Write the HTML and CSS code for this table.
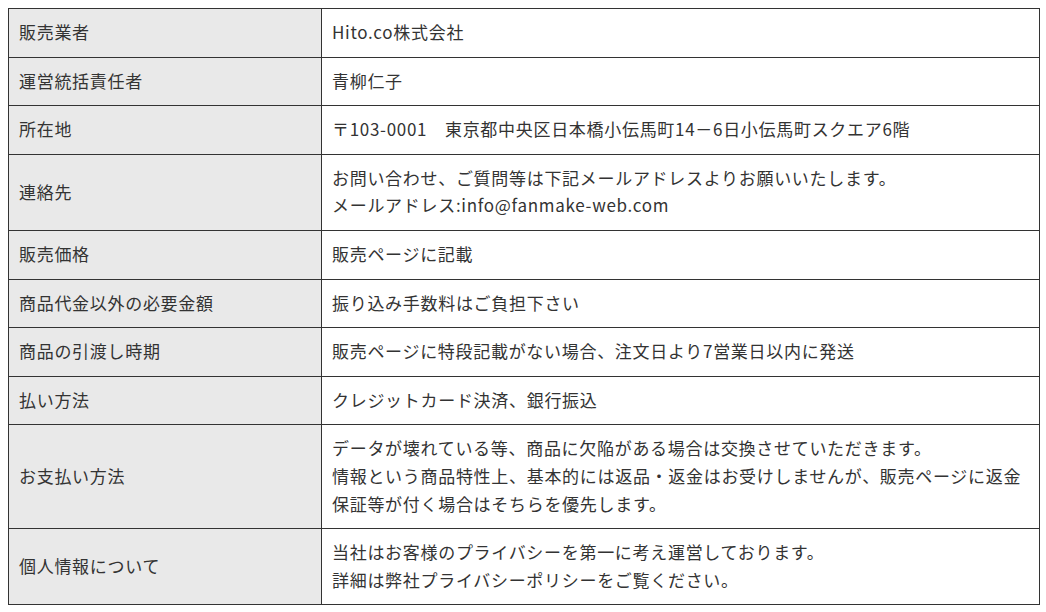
FILE: index.html
```html
<!DOCTYPE html>
<html lang="ja">
<head>
<meta charset="utf-8">
<title>特定商取引法に基づく表記</title>
<link rel="stylesheet" href="styles.css">
</head>
<body>
<table class="info">
  <tbody>
    <tr><th>販売業者</th><td>Hito.co株式会社</td></tr>
    <tr><th>運営統括責任者</th><td>青柳仁子</td></tr>
    <tr><th>所在地</th><td>〒103-0001　東京都中央区日本橋小伝馬町14－6日小伝馬町スクエア6階</td></tr>
    <tr><th>連絡先</th><td>お問い合わせ、ご質問等は下記メールアドレスよりお願いいたします。<br>メールアドレス:info@fanmake-web.com</td></tr>
    <tr><th>販売価格</th><td>販売ページに記載</td></tr>
    <tr><th>商品代金以外の必要金額</th><td>振り込み手数料はご負担下さい</td></tr>
    <tr><th>商品の引渡し時期</th><td>販売ページに特段記載がない場合、注文日より7営業日以内に発送</td></tr>
    <tr><th>払い方法</th><td>クレジットカード決済、銀行振込</td></tr>
    <tr><th>お支払い方法</th><td>データが壊れている等、商品に欠陥がある場合は交換させていただきます。<br>情報という商品特性上、基本的には返品・返金はお受けしませんが、販売ページに返金<br>保証等が付く場合はそちらを優先します。</td></tr>
    <tr><th>個人情報について</th><td>当社はお客様のプライバシーを第一に考え運営しております。<br>詳細は弊社プライバシーポリシーをご覧ください。</td></tr>
  </tbody>
</table>
</body>
</html>
```

FILE: styles.css
```css
html, body {
  margin: 0;
  padding: 0;
  background: #ffffff;
}
body {
  padding: 8px;
  font-family: "Noto Sans CJK JP", "Noto Sans", sans-serif;
  font-size: 17px;
  letter-spacing: 0.7px;
  color: #333333;
}
.info {
  width: 1032px;
  border-collapse: collapse;
  table-layout: fixed;
}
.info th,
.info td {
  border: 1px solid #333333;
  padding: 9px 10px 11px;
  line-height: 27.6px;
  text-align: left;
  vertical-align: middle;
  font-weight: normal;
  white-space: nowrap;
}
.info th {
  width: 292px;
  background: #e9e9e9;
}
.info td {
  background: #ffffff;
}
```
